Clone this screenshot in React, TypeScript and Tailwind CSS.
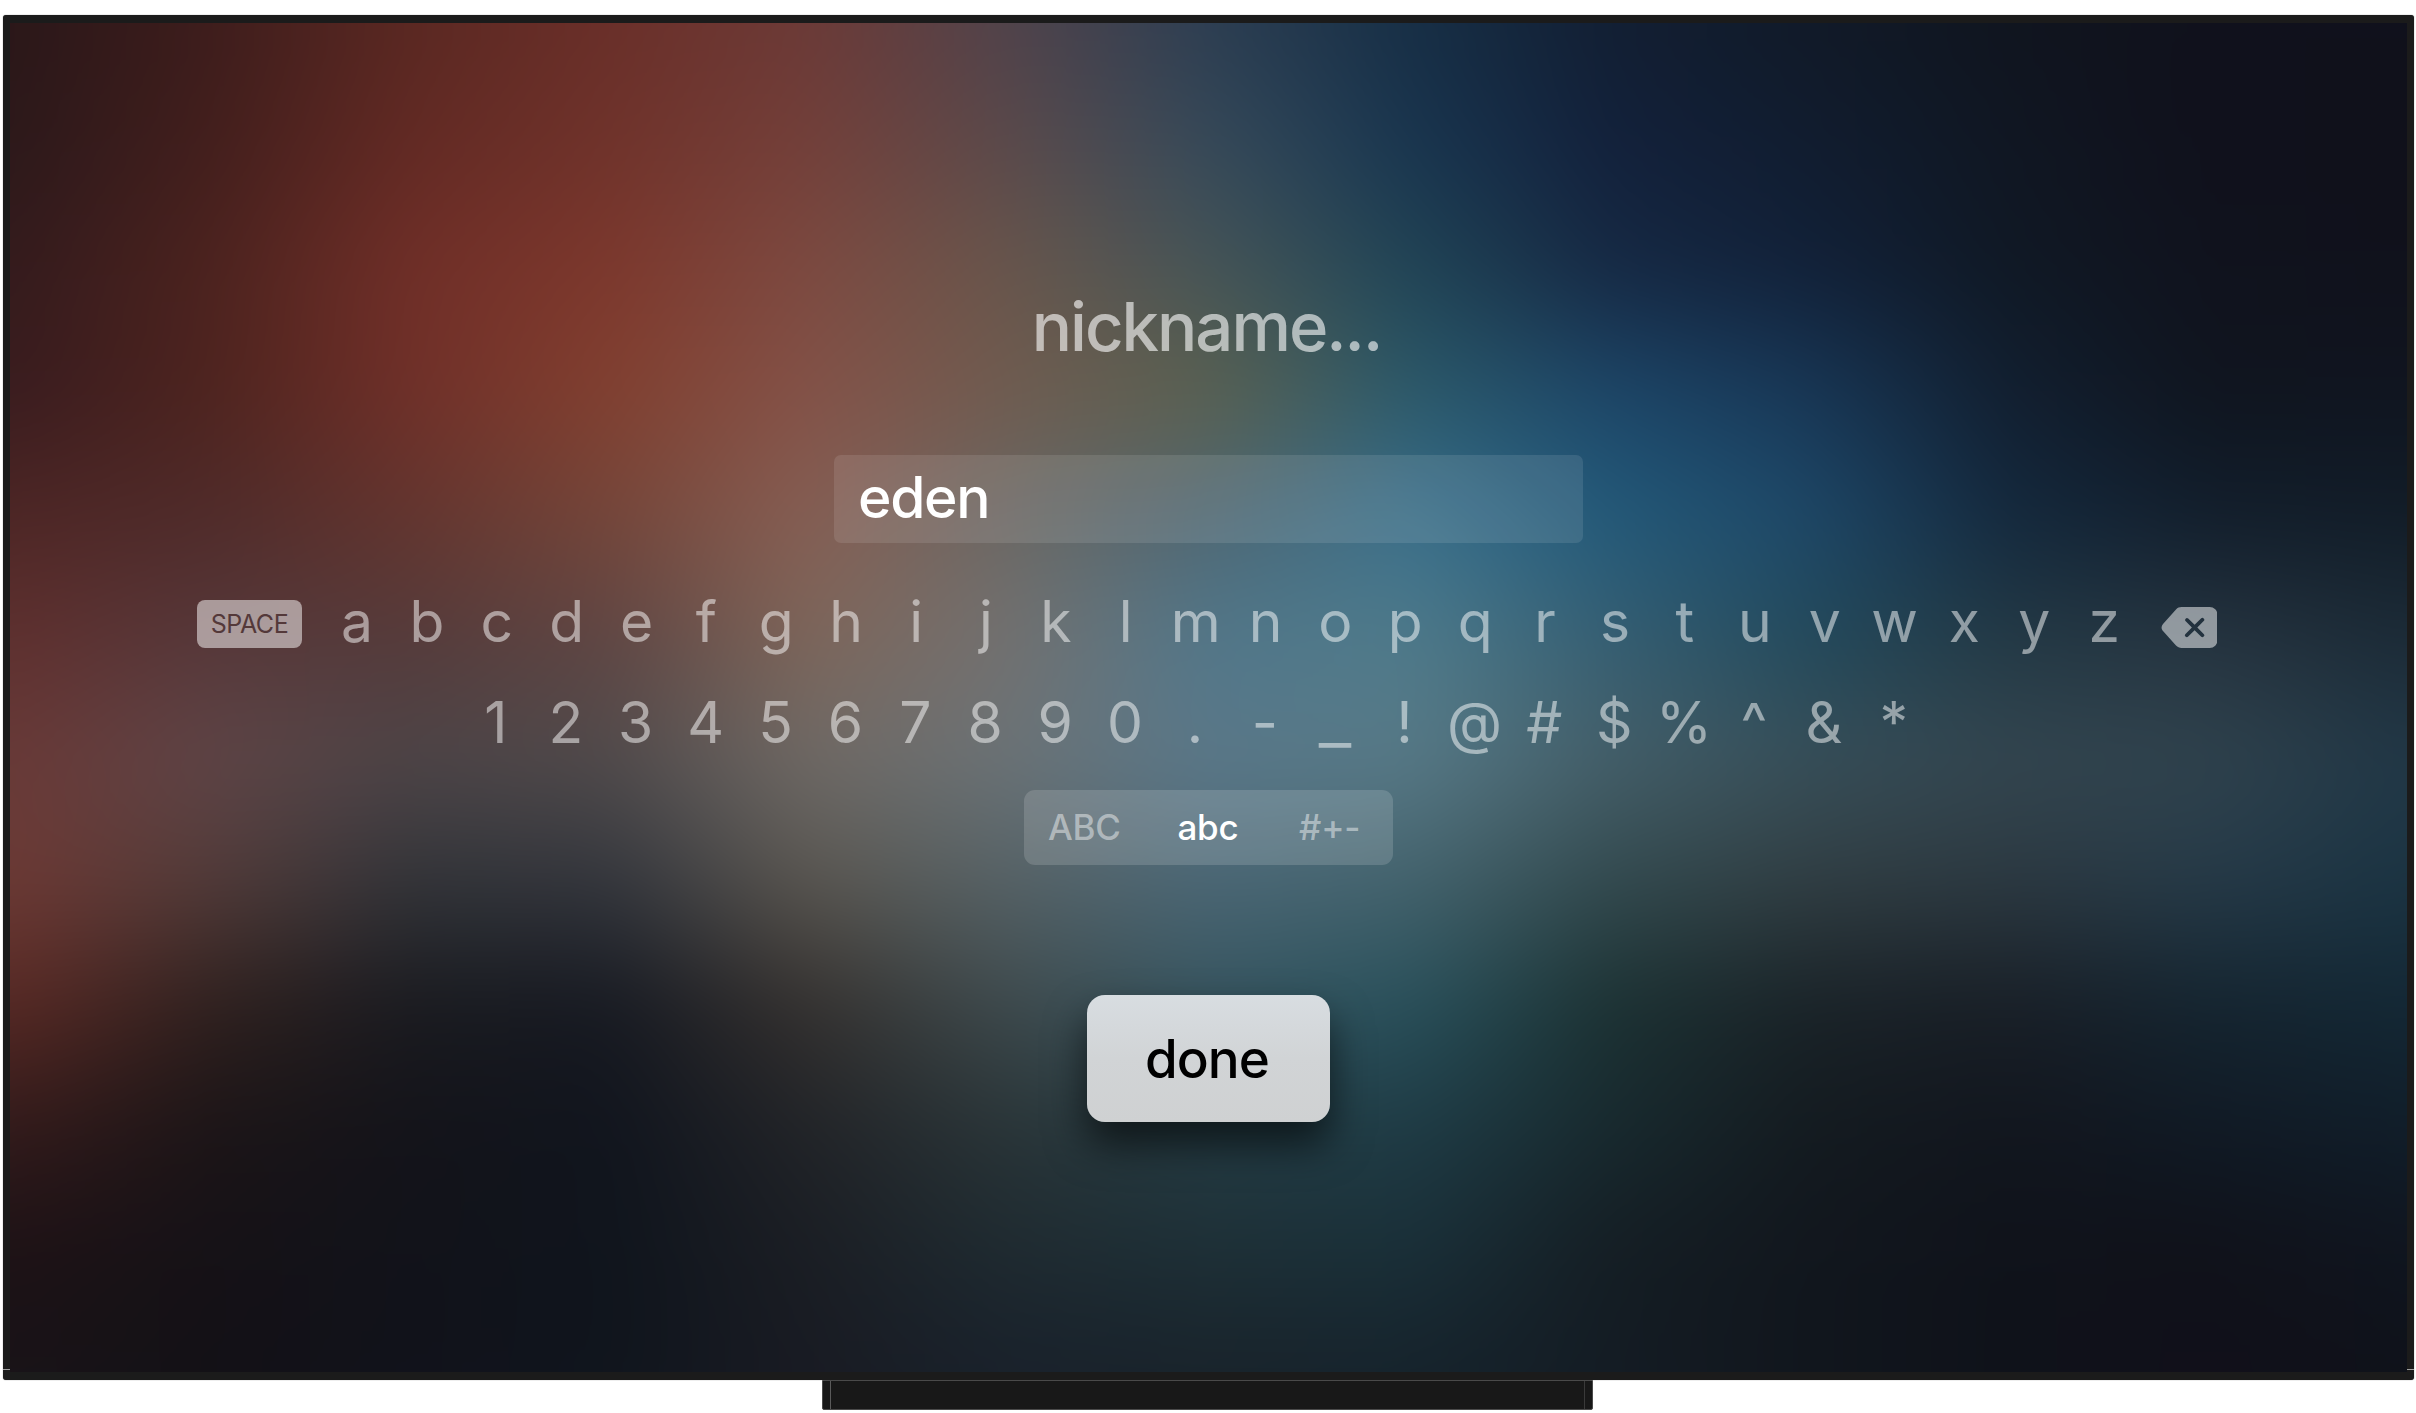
import React from "react";

/** Colour samples of the ambient backdrop, row by row, left to right. */
const MESH: string[] = [
  "2a1719 3d1d1c 5a2822 6a2f29 6c3a37 50434b 2c3e52 172f46 121f33 111a28 10151f 10111c 10111c",
  "2c191b 431f1d 632a24 70332b 74403a 5b4a4b 364a5a 193650 13213c 111d30 101723 10111c 10111b",
  "341b1d 4c231f 702f28 7d382d 7d4a41 68564c 465557 214556 162944 122139 101925 10131e 11121c",
  "391c1f 4e241f 703029 824030 845248 705c50 5b614f 2c5a6a 1d4668 183756 121f30 10151f 101520",
  "4d2625 4f2b2a 63352f 75463a 875f54 6a6864 4f6773 3a708c 235a7a 1e4868 14293e 121e2c 121d28",
  "5f302f 56383a 553b3b 5f4644 7e665a 737170 51778a 4f7b8b 365f73 234a5c 233945 263440 1c2b37",
  "693a38 5f4547 4d4548 504b4c 6f6a66 6b7377 5b7889 587a87 455f69 384f59 344650 30434e 223847",
  "6d3a35 523b39 323439 33363d 5a5650 566266 4b6775 44636d 334a4f 313e43 2c3941 263a48 1b3443",
  "582924 30211f 1a1b20 171a22 35312f 3e4a4d 36545f 29515c 1c3233 1a2328 191f27 152530 142835",
  "331b1b 1c1517 14141a 11151e 222428 2a3538 253c44 1f3c46 182a2f 141b20 12161e 111a25 111e2a",
  "1e1216 161217 12131a 10151d 1b1e24 1f2b31 1e3037 1a3039 151e24 12171e 10131b 10121a 10151f",
  "191318 131116 11121b 10151d 191b23 19212b 19232b 16232c 141c24 11161d 0f121a 11101a 0f121a",
];

const BLEED = 100;
const COL = 2396 / 12;

function strip(row: string) {
  const stops = row
    .split(" ")
    .map((c, i) => `#${c} ${(BLEED + i * COL).toFixed(1)}px`)
    .join(", ");
  return `linear-gradient(90deg, ${stops})`;
}

function Backdrop() {
  return (
    <div className="absolute -inset-[100px] flex flex-col blur-[36px]">
      <div className="h-[100px] shrink-0" style={{ background: strip(MESH[0]) }} />
      {MESH.slice(0, -1).map((row, i) => (
        <div key={i} className="flex flex-1" style={{ background: strip(row) }}>
          <div
            className="flex-1 [mask-image:linear-gradient(to_bottom,transparent,black)]"
            style={{ background: strip(MESH[i + 1]) }}
          />
        </div>
      ))}
      <div className="h-[100px] shrink-0" style={{ background: strip(MESH[MESH.length - 1]) }} />
    </div>
  );
}

function Key({ label }: { label: string }) {
  return (
    <button className="w-[69.9px] shrink-0 text-center text-[57px] leading-[80px] text-white/50">
      {label === "_" ? <span className="inline-block scale-x-125">_</span> : label}
    </button>
  );
}

function Backspace() {
  return (
    <svg width="56" height="41" viewBox="0 0 56 41" className="text-white/50">
      <path
        fill="currentColor"
        fillRule="evenodd"
        d="M20 0H48a8 8 0 0 1 8 8v25a8 8 0 0 1-8 8H20c-2.300 0-4-.8-5.600-2.400L1.400 24c-1.900-2.100-1.900-4.900 0-7L14.400 2.400C16 .8 17.700 0 20 0Z
        M26.500 11.400a1.900 1.900 0 0 0-2.600 2.700l6.400 6.400-6.400 6.400a1.900 1.900 0 0 0 2.700 2.700l6.400-6.400 6.400 6.400a1.900 1.900 0 0 0 2.700-2.700l-6.400-6.400 6.400-6.400a1.900 1.900 0 0 0-2.700-2.700l-6.400 6.400-6.400-6.400Z"
        transform="translate(.6 0)"
      />
    </svg>
  );
}

export default function App() {
  return (
    <div className="flex h-[1413px] w-[2416px] flex-col overflow-hidden bg-white pt-[15px] pl-[3px] font-['Inter',sans-serif]">
      <div className="relative h-[1365px] w-[2411px] shrink-0 rounded-[3px] bg-[#1b1b1b] px-[7px] py-[8px] shadow-[0_0_1px_#555]">
        <div className="absolute bottom-[10px] left-0 h-px w-[7px] bg-[#a0a0a0]" />
        <div className="absolute right-0 bottom-[10px] h-px w-[7px] bg-[#a0a0a0]" />
        <div className="relative h-full overflow-hidden">
          <Backdrop />
          <main className="relative flex h-full flex-col items-center">
            <h1 className="mt-[264px] mr-[4px] h-[80px] text-[67px] leading-[80px] font-medium tracking-[-2px] whitespace-nowrap text-white/60">
              nickname...
            </h1>
            <div className="mt-[88px] flex h-[88px] w-[749px] shrink-0 items-center rounded-[7px] bg-white/10 pb-[2px] pl-[24px] text-[57px] font-medium tracking-[-1.3px] text-white">
              eden
            </div>
            <div className="mt-[38px] flex h-[80px] w-full pl-[187px]">
              <button className="mt-[19px] mr-[20px] flex h-[48px] w-[105px] shrink-0 items-center justify-center rounded-[8px] bg-white/50 pt-px text-[25px] tracking-[-0.5px] text-[#54393a]">
                SPACE
              </button>
              <div className="flex pt-px">
                {"abcdefghijklmnopqrstuvwxyz".split("").map((c) => (
                  <Key key={c} label={c} />
                ))}
              </div>
              <button className="mt-[26px] ml-[22px] flex h-[41px] w-[56px]">
                <Backspace />
              </button>
            </div>
            <div className="mt-[22px] flex h-[80px] w-full pl-[451px]">
              {"1234567890.-_!@#$%^&*".split("").map((c) => (
                <Key key={c} label={c} />
              ))}
            </div>
            <div className="mt-[27px] mr-[1px] flex h-[75px] w-[369px] shrink-0 items-center rounded-[11px] bg-white/15 text-[35px] tracking-[-0.2px] text-white/45">
              <span className="flex-1 pr-[2px] text-center font-medium">ABC</span>
              <span className="flex-1 text-center font-medium text-white">abc</span>
              <span className="flex-1 pr-[2px] text-center font-medium">#+-</span>
            </div>
            <button className="mt-[130px] mr-[1px] h-[127px] w-[243px] shrink-0 rounded-[18px] bg-linear-to-b from-[#d8dde1] via-[#d1d4d6] to-[#cfd1d2] pt-[2px] pr-[2px] text-[53px] font-medium tracking-[-1px] text-black shadow-[0_22px_40px_rgba(0,0,0,0.62)]">
              done
            </button>
          </main>
        </div>
      </div>
      <div className="ml-[819px] flex h-[30px] w-[771px] shrink-0 justify-between rounded-b-[2px] border border-[#4a4a4a] bg-[#181818] px-[7px]">
        <div className="w-px bg-[#5a5a5a]" />
        <div className="w-px bg-[#3a3a3a]" />
      </div>
    </div>
  );
}
